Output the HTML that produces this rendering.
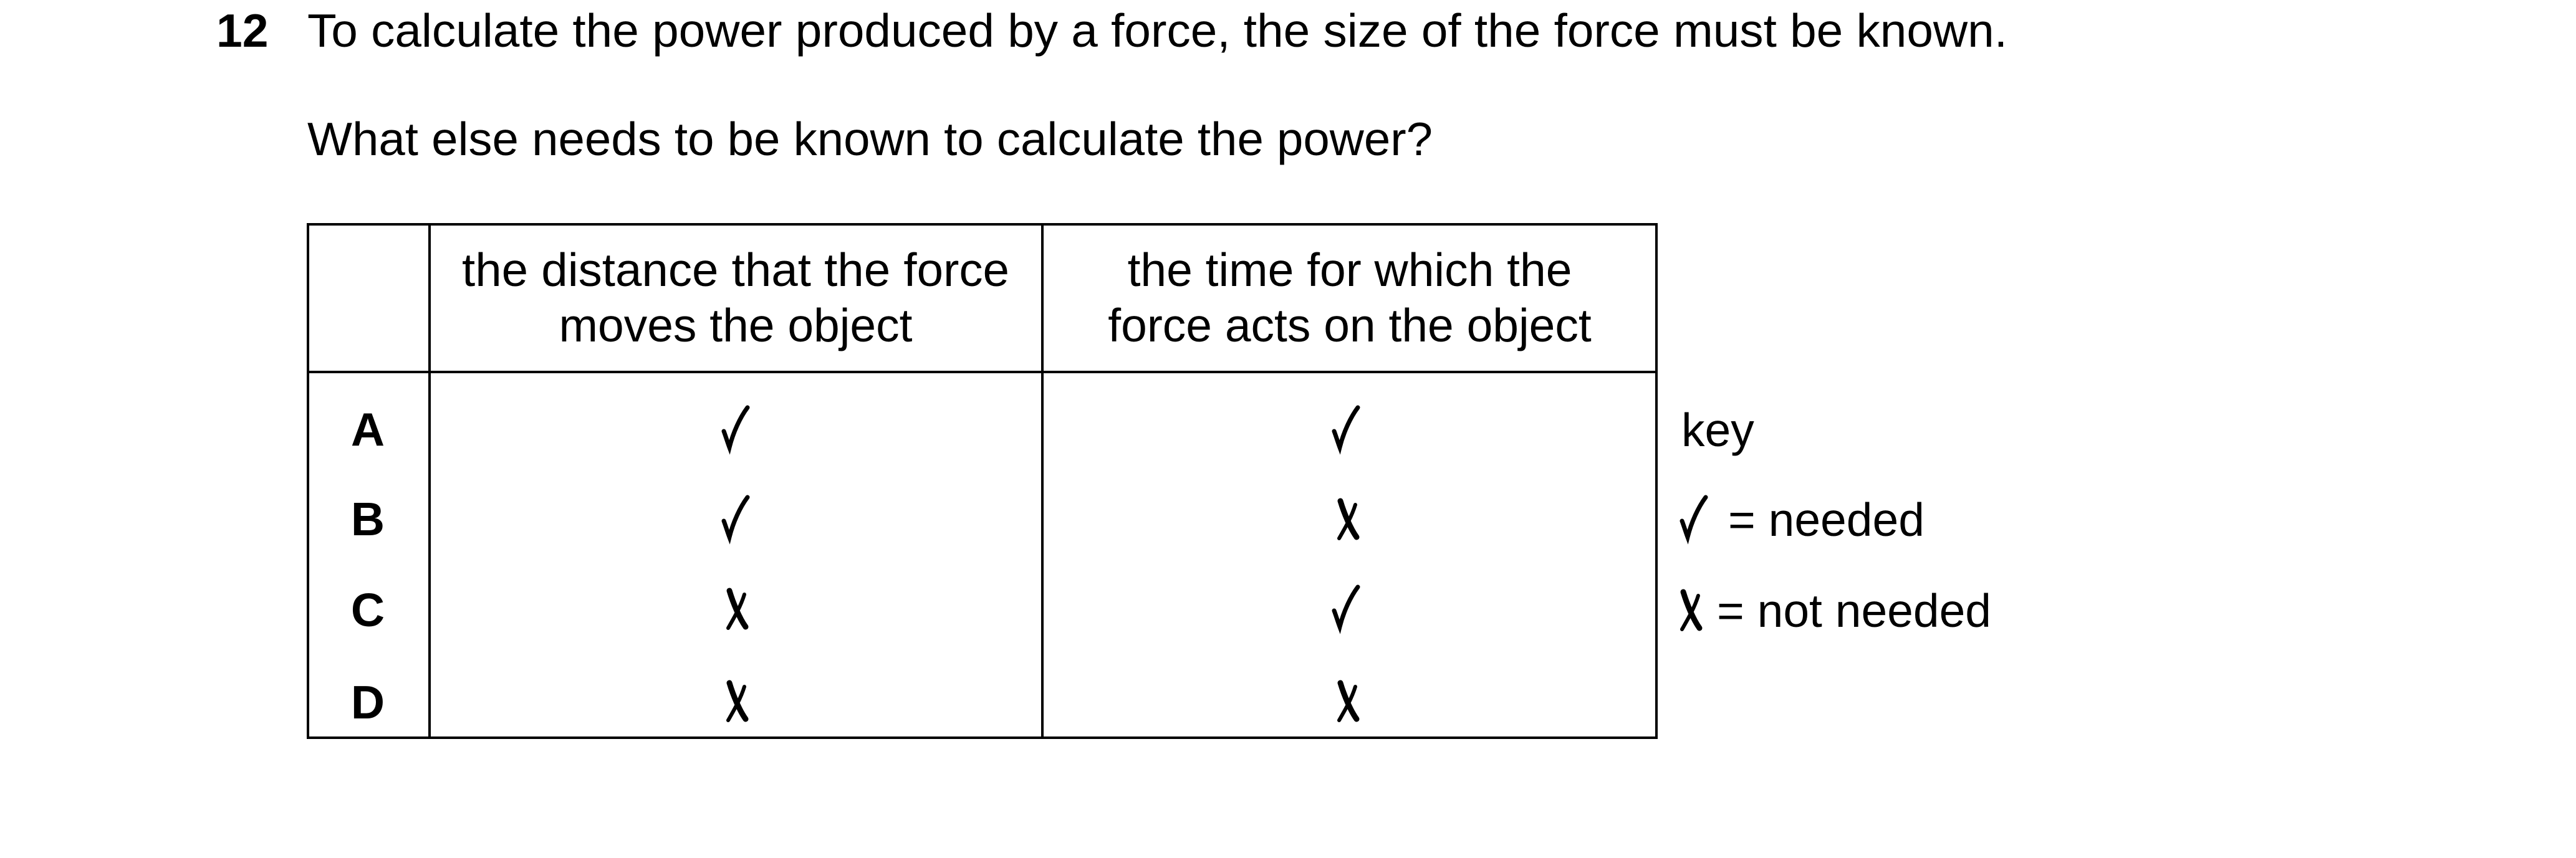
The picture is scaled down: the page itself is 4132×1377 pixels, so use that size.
<!DOCTYPE html>
<html><head><meta charset="utf-8"><style>html,body{margin:0;padding:0;background:#fff;}svg{display:block}</style></head>
<body>
<svg width="4132" height="1377" viewBox="0 0 4132 1377" xmlns="http://www.w3.org/2000/svg" font-family="Liberation Sans, Arial, sans-serif" font-size="75" fill="#000">
<text x="347" y="75" font-weight="bold">12</text>
<text x="493" y="75" textLength="2727" lengthAdjust="spacingAndGlyphs">To calculate the power produced by a force, the size of the force must be known.</text>
<text x="493" y="249" textLength="1805" lengthAdjust="spacingAndGlyphs">What else needs to be known to calculate the power?</text>
<g stroke="#000" stroke-width="4" fill="none">
<rect x="494" y="360" width="2163" height="824"/>
<line x1="689" y1="360" x2="689" y2="1184"/>
<line x1="1672" y1="360" x2="1672" y2="1184"/>
<line x1="494" y1="597" x2="2657" y2="597"/>
</g>
<g text-anchor="middle">
<text x="1180" y="459" textLength="878" lengthAdjust="spacingAndGlyphs">the distance that the force</text>
<text x="1180" y="548">moves the object</text>
<text x="2165" y="459">the time for which the</text>
<text x="2165" y="548">force acts on the object</text>
<g font-weight="bold">
<text x="590" y="715">A</text>
<text x="590" y="859">B</text>
<text x="590" y="1005">C</text>
<text x="590" y="1153">D</text>
</g>
</g>
<defs>
<path id="ck" d="M-20,-26 C-17,-18 -14,-8 -11,0 C-5,-24 6,-48 18,-64" stroke="#000" stroke-width="7" fill="none" stroke-linecap="round"/>
<g id="cx"><path d="M-12,-58 C-6,-38 4,-14 14,0" stroke="#000" stroke-width="9" fill="none" stroke-linecap="round"/><path d="M12,-52 C6,-32 -6,-12 -14,2" stroke="#000" stroke-width="6" fill="none" stroke-linecap="round"/></g>
</defs>
<use href="#ck" x="1181" y="718"/>
<use href="#ck" x="1181" y="862"/>
<use href="#cx" x="1182" y="1006"/>
<use href="#cx" x="1182" y="1154"/>
<use href="#ck" x="2160" y="718"/>
<use href="#cx" x="2162" y="862"/>
<use href="#ck" x="2160" y="1006"/>
<use href="#cx" x="2162" y="1154"/>
<text x="2697" y="716">key</text>
<use href="#ck" x="2718" y="862"/>
<text x="2772" y="860">= needed</text>
<use href="#cx" x="2712" y="1008"/>
<text x="2754" y="1006">= not needed</text>
</svg>
</body></html>
